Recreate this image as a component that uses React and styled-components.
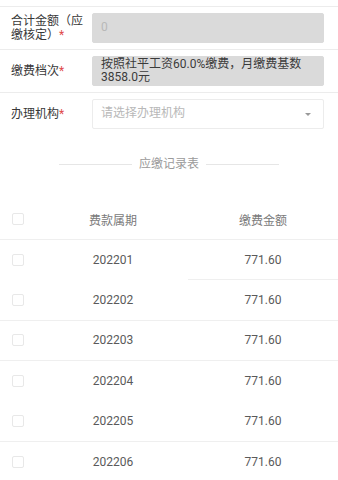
import React from "react";
import styled, { createGlobalStyle } from "styled-components";

const Global = createGlobalStyle`
  html, body { margin: 0; padding: 0; background: #fff; }
  body { font-family: Roboto, "Noto Sans CJK SC", sans-serif; -webkit-font-smoothing: antialiased; }
  * { box-sizing: border-box; }
`;

const Page = styled.div`
  width: 338px;
  padding-top: 6px;
  background: #fff;
`;

const FormRow = styled.div`
  display: flex;
  align-items: center;
  padding: 6px 14px 6px 11px;
  border-top: 1px solid #ececec;
`;

const Label = styled.div`
  width: 81px;
  flex: none;
  font-size: 12px;
  line-height: 14px;
  color: #383838;
  text-spacing-trim: space-all;
`;

const Star = styled.span`
  display: inline-block;
  color: #e04a4a;
`;

const Field = styled.div`
  flex: 1;
  height: 30px;
  display: flex;
  align-items: center;
  justify-content: space-between;
  padding: 0 8px;
  border-radius: 2px;
  font-size: 12px;
  line-height: 13.5px;
  background: ${(p) => (p.$disabled ? "#dadada" : "#fff")};
  border: 1px solid ${(p) => (p.$disabled ? "#dadada" : "#ececec")};
  color: ${(p) => (p.$placeholder ? "#b8b8b8" : "#3a3a3a")};
`;

const Caret = styled.span`
  width: 0;
  height: 0;
  margin-right: 4px;
  border-left: 3px solid transparent;
  border-right: 3px solid transparent;
  border-top: 3px solid #999;
`;

const Divider = styled.div`
  display: flex;
  align-items: center;
  justify-content: center;
  gap: 7px;
  margin: 21px 0 27px;
  font-size: 12px;
  line-height: 16px;
  color: #9a9a9a;
  &::before, &::after {
    content: "";
    width: 73px;
    height: 1px;
    background: #e6e6e6;
  }
`;

const Table = styled.div`
  display: flex;
  flex-direction: column;
`;

const TRow = styled.div`
  display: grid;
  grid-template-columns: 38px 150px 150px;
  height: ${(p) => p.$h}px;
`;

const Cell = styled.div`
  display: flex;
  align-items: center;
  justify-content: center;
  font-size: 12px;
  color: ${(p) => (p.$head ? "#7a7a7a" : "#5a5a5a")};
  border-bottom: 1px solid ${(p) => (p.$line ? "#efefef" : "transparent")};
`;

const CheckCell = styled(Cell)`
  justify-content: flex-start;
  padding-left: 12px;
`;

const Box = styled.span`
  width: 12px;
  height: 12px;
  border: 1px solid #e8e8e8;
  border-radius: 2px;
  background: #fff;
`;

const rows = [
  { p: "202201", a: "771.60", line: "right" },
  { p: "202202", a: "771.60", line: "full" },
  { p: "202203", a: "771.60", line: "full" },
  { p: "202204", a: "771.60", line: "none" },
  { p: "202205", a: "771.60", line: "full" },
  { p: "202206", a: "771.60", line: "full" },
];

export default function App() {
  return (
    <Page>
      <Global />
      <FormRow>
        <Label>
          合计金额（应
          <br />
          缴核定）<Star>*</Star>
        </Label>
        <Field $disabled $placeholder>0</Field>
      </FormRow>
      <FormRow>
        <Label>
          缴费档次<Star>*</Star>
        </Label>
        <Field $disabled>按照社平工资60.0%缴费，月缴费基数3858.0元</Field>
      </FormRow>
      <FormRow>
        <Label>
          办理机构<Star>*</Star>
        </Label>
        <Field $placeholder>
          请选择办理机构
          <Caret />
        </Field>
      </FormRow>

      <Divider>应缴记录表</Divider>

      <Table>
        <TRow $h={41}>
          <CheckCell $head $line>
            <Box />
          </CheckCell>
          <Cell $head $line>费款属期</Cell>
          <Cell $head $line>缴费金额</Cell>
        </TRow>
        {rows.map((r) => (
          <TRow key={r.p} $h={40.4}>
            <CheckCell $line={r.line === "full"}>
              <Box />
            </CheckCell>
            <Cell $line={r.line === "full"}>{r.p}</Cell>
            <Cell $line={r.line !== "none"}>{r.a}</Cell>
          </TRow>
        ))}
      </Table>
    </Page>
  );
}
